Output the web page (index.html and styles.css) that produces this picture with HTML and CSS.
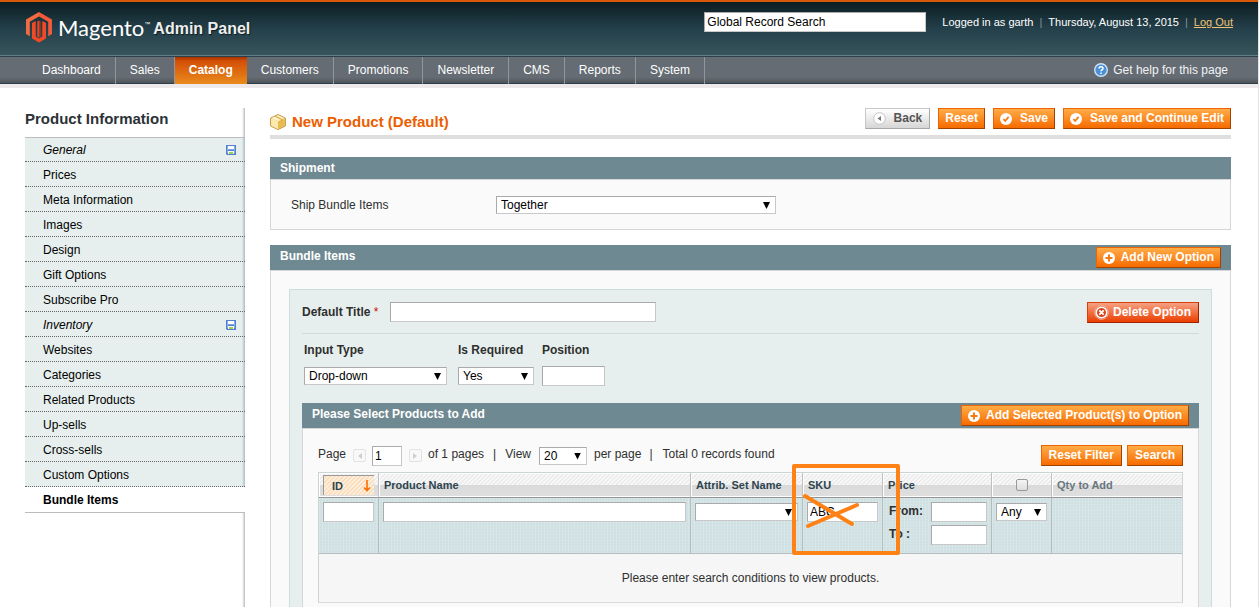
FILE: index.html
```html
<!DOCTYPE html>
<html lang="en">
<head>
<meta charset="utf-8">
<title>New Product / Magento Admin</title>
<link rel="stylesheet" href="styles.css">
</head>
<body>
<svg class="defs" width="0" height="0" aria-hidden="true">
  <defs>
    <symbol id="i-check" viewBox="0 0 12 12"><circle cx="6" cy="6" r="6" fill="#fff"/><path d="M3.4 6.2 5.2 8 8.6 3.9" fill="none" stroke="#f47b14" stroke-width="1.8"/></symbol>
    <symbol id="i-plus" viewBox="0 0 12 12"><circle cx="6" cy="6" r="6" fill="#fff"/><path d="M6 2.5v7M2.5 6h7" fill="none" stroke="#f47b14" stroke-width="2"/></symbol>
    <symbol id="i-back" viewBox="0 0 13 13"><circle cx="6.500" cy="6.500" r="5.800" fill="#fff" stroke="#c4c4c4"/><path d="M8 4v5L4.500 6.500z" fill="#777"/></symbol>
    <symbol id="i-delete" viewBox="0 0 15 15"><circle cx="7.500" cy="7.500" r="6.800" fill="#d9441a" stroke="#f6b49a"/><circle cx="7.500" cy="7.500" r="5.300" fill="none" stroke="#fff" stroke-width="1.600"/><path d="M5.300 5.300l4.400 4.400M9.700 5.300 5.300 9.700" stroke="#fff" stroke-width="1.800"/></symbol>
    <symbol id="i-disk" viewBox="0 0 10 10"><path d="M0 0h10v10H1L0 9z" fill="#5580cc"/><path d="M1 1h1v7H1zM8 1h1v7H8z" fill="#86aceb"/><path d="M2 1h6v3H2z" fill="#fff"/><path d="M2 4h6v1H2z" fill="#7ba3e6"/><path d="M2 6h6v3H2z" fill="#f4faef"/><path d="M3 7h4v2H3z" fill="#9ccf5a"/></symbol>
  </defs>
</svg>
<div class="page">
  <header class="header">
    <a class="logo" href="#" aria-label="Magento Admin Panel">
      <svg width="28" height="32" viewBox="0 0 28 32" aria-hidden="true"><path d="M14 1 27 8.500v14.600l-3.800 2.200V10.700L14 5.400z" fill="#f0593a"/><path d="M14 1 1 8.500v14.600l3.800 2.200V10.700L14 5.400z" fill="#f26b43"/><path d="M7 12l3.700-2.100V25.500l3.300 2 3.300-2V9.900L21 12v15.500L14 31.500 7 27.500z" fill="#f04a24"/><path d="M12.300 10.500 14 9.500v17l-1.700-1z" fill="#d94a2c"/><path d="M15.700 10.500 14 9.500v17l1.700-1z" fill="#b92f18"/></svg>
      <span class="logo-name">Magento</span><span class="logo-tm">™</span><span class="logo-panel">Admin Panel</span>
    </a>
    <div class="header-right">
      <input class="search" type="text" value="Global Record Search" aria-label="Global Record Search">
      <p class="account">Logged in as garth<span class="bar">|</span>Thursday, August 13, 2015<span class="bar">|</span><a href="#">Log Out</a></p>
    </div>
  </header>
  <nav class="nav">
    <ul>
      <li><a href="#">Dashboard</a></li>
      <li><a href="#">Sales</a></li>
      <li class="active"><a href="#">Catalog</a></li>
      <li><a href="#">Customers</a></li>
      <li><a href="#">Promotions</a></li>
      <li><a href="#">Newsletter</a></li>
      <li><a href="#">CMS</a></li>
      <li><a href="#">Reports</a></li>
      <li><a href="#">System</a></li>
    </ul>
    <a class="help" href="#"><svg width="14" height="14" viewBox="0 0 14 14" aria-hidden="true"><circle cx="7" cy="7" r="6.300" fill="#4b8fd6" stroke="#cfe2f5" stroke-width="1.400"/><path d="M5 5.600C5 3 9 3.100 9 5.400 9 6.800 7 6.800 7 8.300M7 9.400v1.500" fill="none" stroke="#fff" stroke-width="1.500"/></svg>Get help for this page</a>
  </nav>
  <div class="workspace">
    <aside class="side">
      <h3>Product Information</h3>
      <ul class="tabs">
        <li><a class="changed" href="#">General<svg width="10" height="10"><use href="#i-disk"/></svg></a></li>
        <li><a href="#">Prices</a></li>
        <li><a href="#">Meta Information</a></li>
        <li><a href="#">Images</a></li>
        <li><a href="#">Design</a></li>
        <li><a href="#">Gift Options</a></li>
        <li><a href="#">Subscribe Pro</a></li>
        <li><a class="changed" href="#">Inventory<svg width="10" height="10"><use href="#i-disk"/></svg></a></li>
        <li><a href="#">Websites</a></li>
        <li><a href="#">Categories</a></li>
        <li><a href="#">Related Products</a></li>
        <li><a href="#">Up-sells</a></li>
        <li><a href="#">Cross-sells</a></li>
        <li><a href="#">Custom Options</a></li>
        <li><a class="current" href="#">Bundle Items</a></li>
      </ul>
    </aside>
    <main class="main">
      <div class="title-bar">
        <h1><svg width="16" height="16" viewBox="0 0 16 16" aria-hidden="true"><path d="M8 .6 15.300 4v8L8 15.500.7 12V4z" fill="#f6dc8c" stroke="#bf8f38"/><path d="M1.200 4.300 8 7.500v7.400L1.200 11.700z" fill="#fbe9ae"/><path d="M14.800 4.300 8 7.500v7.400l6.800-3.200z" fill="#e9bb52"/><path d="M8 1.200 14.300 4 8 7 1.700 4z" fill="#fdf3cf"/><path d="M4.500 2.700l6.500 3v2.500l1.500-.7V5L6 2.100z" fill="#e2b14d"/></svg>New Product (Default)</h1>
        <div class="actions">
          <button class="btn back" type="button"><svg width="13" height="13"><use href="#i-back"/></svg>Back</button>
          <button class="btn" type="button">Reset</button>
          <button class="btn" type="button"><svg width="12" height="12"><use href="#i-check"/></svg>Save</button>
          <button class="btn" type="button"><svg width="12" height="12"><use href="#i-check"/></svg>Save and Continue Edit</button>
        </div>
      </div>

      <section class="panel">
        <h4 class="panel-head slim">Shipment</h4>
        <div class="panel-body shipment">
          <label for="ship">Ship Bundle Items</label>
          <span class="select w-ship"><select id="ship"><option>Together</option></select></span>
        </div>
      </section>

      <section class="panel grow">
        <div class="panel-head"><h4>Bundle Items</h4><button class="btn add" type="button"><svg width="12" height="12"><use href="#i-plus"/></svg>Add New Option</button></div>
        <div class="panel-body items">
          <div class="option">
            <div class="option-title">
              <label for="title">Default Title <em>*</em></label>
              <input id="title" class="w-title" type="text">
              <button class="btn delete" type="button"><svg width="15" height="15"><use href="#i-delete"/></svg>Delete Option</button>
            </div>
            <div class="option-fields">
              <div class="field"><label for="type">Input Type</label><span class="select w-type"><select id="type"><option>Drop-down</option></select></span></div>
              <div class="field"><label for="req">Is Required</label><span class="select w-req"><select id="req"><option>Yes</option></select></span></div>
              <div class="field"><label for="pos">Position</label><input id="pos" type="text"></div>
            </div>

            <section class="panel grow">
              <div class="panel-head"><h4>Please Select Products to Add</h4><button class="btn add" type="button"><svg width="12" height="12"><use href="#i-plus"/></svg>Add Selected Product(s) to Option</button></div>
              <div class="panel-body grid-body">
                <div class="pager">
                  <label for="pg">Page</label>
                  <button class="arrow" type="button" aria-label="Previous page"><svg width="5" height="6" viewBox="0 0 5 6"><path d="M5 0v6L1 3z" fill="#cfcfcf"/></svg></button>
                  <input id="pg" class="w-page" type="text" value="1">
                  <button class="arrow" type="button" aria-label="Next page"><svg width="5" height="6" viewBox="0 0 5 6"><path d="M0 0v6l4-3z" fill="#cfcfcf"/></svg></button>
                  <span class="text">of 1 pages</span><span class="text sep">|</span>
                  <label for="per">View</label>
                  <span class="select w-per"><select id="per"><option>20</option></select></span>
                  <span class="text">per page</span><span class="text sep tight">|</span><span class="text">Total 0 records found</span>
                  <div class="pager-actions"><button class="btn" type="button">Reset Filter</button><button class="btn" type="button">Search</button></div>
                </div>
                <table class="grid">
                  <colgroup><col class="c-id"><col><col class="c-set"><col class="c-sku"><col class="c-price"><col class="c-any"><col class="c-qty"></colgroup>
                  <thead>
                    <tr>
                      <th class="sorted"><a href="#">ID<svg width="8" height="12" viewBox="0 0 8 12" aria-hidden="true"><path d="M4 0v10M1 7.500l3 3 3-3" fill="none" stroke="#ff6c00" stroke-width="1.600"/></svg></a></th>
                      <th>Product Name</th>
                      <th>Attrib. Set Name</th>
                      <th class="marked">SKU<svg class="mark" width="108" height="91" viewBox="0 0 108 91" aria-hidden="true"><g fill="none" stroke="#ff8217" stroke-width="4"><rect x="2" y="2" width="104" height="87" stroke-linejoin="round"/><path d="M13 32l47 28M16 62l49-21" stroke-linecap="round"/></g></svg></th>
                      <th>Price</th>
                      <th class="tick"><input type="checkbox" aria-label="Select all"></th>
                      <th class="muted">Qty to Add</th>
                    </tr>
                  </thead>
                  <tbody>
                    <tr class="filter">
                      <td><input type="text" aria-label="ID"></td>
                      <td><input type="text" aria-label="Product Name"></td>
                      <td><span class="select"><select aria-label="Attribute set"><option></option></select></span></td>
                      <td><input type="text" value="ABC" aria-label="SKU"></td>
                      <td><div class="range"><label for="from">From:</label><input id="from" type="text"><label for="to">To :</label><input id="to" type="text"></div></td>
                      <td><span class="select"><select aria-label="Selected"><option>Any</option></select></span></td>
                      <td></td>
                    </tr>
                    <tr class="empty"><td colspan="7">Please enter search conditions to view products.</td></tr>
                  </tbody>
                </table>
              </div>
            </section>
          </div>
        </div>
      </section>
    </main>
  </div>
</div>
</body>
</html>
```
FILE: styles.css
```css
* { box-sizing: border-box; }
body { margin: 0; background: #fff; color: #2f2f2f; font: 12px/16px "Liberation Sans", Arial, sans-serif; }
h1, h3, h4, p, ul { margin: 0; padding: 0; }
ul { list-style: none; }
a { color: inherit; text-decoration: none; }
svg { display: block; flex: none; }
.defs { position: absolute; }
.page { display: flex; flex-direction: column; min-height: 100vh; border-right: 1px solid #e3e3e3; }

input, select, button { margin: 0; font: inherit; border-radius: 0; }
input[type="text"] { display: block; width: 100%; height: 20px; padding: 0 2px; border: 1px solid #aaa; border-right-color: #c8c8c8; border-bottom-color: #c8c8c8; background: #fff; color: #000; }
.select { position: relative; display: block; }
.select select { display: block; width: 100%; height: 18px; padding: 0 4px; border: 1px solid #aaa; border-right-color: #c8c8c8; border-bottom-color: #c8c8c8; background: #fff; color: #000; line-height: 16px; appearance: none; }
.select::after { content: ""; position: absolute; right: 6px; top: 6px; width: 7px; height: 7px; background: #000; clip-path: polygon(0 0, 100% 0, 50% 100%); pointer-events: none; }

.header { display: flex; justify-content: space-between; height: 57px; padding: 9px 25px 0; border-top: 2px solid #d85909; background: linear-gradient(#0b1d22, #24404a 50%, #38555d); border-bottom: 1px solid #2b404c; box-shadow: inset 0 -1px #637e87; color: #fff; }
.logo { display: flex; align-items: flex-start; }
.logo-name { margin-left: 5px; font: 22px/34px Lato, "Open Sans", sans-serif; }
.logo-tm { font-size: 6px; line-height: 26px; }
.logo-panel { margin-left: 3px; font: bold 16px/36px "Liberation Sans", Arial, sans-serif; color: #eee; text-shadow: 1px 1px 1px #0b1d22; }
.header-right { display: flex; align-items: flex-start; gap: 16px; padding-top: 1px; }
.header-right .search { width: 222px; }
.account { font-size: 11px; line-height: 20px; white-space: nowrap; }
.account .bar { margin: 0 6px; color: #84949a; }
.account a { color: #f0c274; text-decoration: underline; }

.nav { display: flex; justify-content: space-between; height: 31px; padding: 0 30px 0 28px; border-bottom: 4px solid #eeeaec; background: linear-gradient(#656c73 75%, #4e5459 96%, #2c414e 97%); color: #fff; line-height: 26px; }
.nav ul { display: flex; }
.nav li { height: 27px; padding: 0 14px; border-right: 1px solid #8f979b; }
.nav .active { padding: 0 14px; border-right: 0; background: linear-gradient(#a83200, #d45007 15%, #e98b1c); font-weight: bold; }
.help { display: flex; align-items: center; gap: 5px; height: 26px; color: #f1f3f5; }

.workspace { flex: 1; display: flex; gap: 25px; padding: 20px 27px 0 25px; }
.side { flex: none; width: 220px; background: linear-gradient(to right, #fff 217px, #ececec 218px, #bbb); }
.side h3 { height: 29px; font-size: 15px; line-height: 22px; color: #2b3236; }
.tabs { border-top: 1px solid #bcbcbc; border-bottom: 1px solid #bcbcbc; }
.tabs a { display: flex; justify-content: space-between; align-items: center; height: 25px; padding: 1px 9px 0 18px; border-bottom: 1px dotted #666; background: linear-gradient(to right, #e7efee 217px, #cfdcdd 218px, #a9bfc1); color: #000; }
.tabs li:first-child a { height: 24px; }
.tabs .changed { font-style: italic; }
.tabs .current { padding-top: 0; border: 0; background: #fff; font-weight: bold; }

.main { flex: 1; min-width: 0; display: flex; flex-direction: column; }
.title-bar { display: flex; justify-content: space-between; align-items: flex-start; height: 31px; margin-bottom: 18px; border-bottom: 4px solid #dfdfdf; }
h1 { display: flex; align-items: center; gap: 6px; padding-top: 4px; font-size: 15px; line-height: 20px; color: #eb5e00; white-space: nowrap; }
.actions { display: flex; gap: 8px; }
.btn { display: flex; align-items: center; gap: 8px; height: 21px; padding: 0 7px; border: 1px solid; border-color: #ed6502 #a04300 #a04300 #ed6502; background: linear-gradient(#ffac47, #f76b00); color: #fff; font-weight: bold; line-height: 17px; white-space: nowrap; cursor: pointer; }
.actions .btn { padding: 0 6px; }
.actions .back { padding: 0 7px; border-color: #c8c8c8 #a8a8a8 #a8a8a8 #c8c8c8; background: linear-gradient(#fff, #d6d6d6); color: #555; }
.btn.add { gap: 6px; padding: 0 6px; }
.btn.delete { gap: 4px; margin-left: auto; padding: 0 7px 0 6px; border-color: #d93f08 #a02200 #a02200 #d93f08; background: linear-gradient(#f6a183, #eb3e00); }

.panel { margin-bottom: 15px; }
.panel.grow, .items, .option, .grid-body { flex: 1; display: flex; flex-direction: column; margin-bottom: 0; }
.panel-head { display: flex; justify-content: space-between; height: 25px; padding: 2px 10px; background: #6f8992; color: #fff; line-height: 18px; }
.panel-head.slim { height: 22px; font-size: 12px; }
.panel-head h4 { font-size: 12px; }
.panel-body { border: 1px solid #d6d6d6; background: #fafafa; }
.shipment { display: flex; align-items: center; padding: 16px 20px 15px; }
.shipment label { width: 205px; }
.items { padding: 18px 18px 0; border-bottom: 0; }
.option { padding: 12px 12px 0; border: 1px solid #cddddd; border-bottom: 0; background: #e7efee; }
.option-title { display: flex; align-items: center; height: 32px; padding-bottom: 11px; border-bottom: 1px solid #cddddd; font-weight: bold; }
.option-title label { width: 88px; }
.option-title em { color: #d40707; font-style: normal; font-weight: normal; }
.option-title input { font-weight: normal; }
.option-fields { display: grid; grid-template-columns: 154px 84px 63px; padding: 8px 2px 17px; }
.field label { display: block; height: 24px; font-weight: bold; }
.field .select { margin-top: 1px; }
.w-ship { width: 280px; }
.option-title .w-title { width: 266px; }
.w-type { width: 143px; }
.w-req { width: 76px; }

.grid-body { padding: 16px 15px 0; border-bottom: 0; }
.pager { display: flex; align-items: center; height: 21px; margin-bottom: 6px; white-space: nowrap; }
.pager label, .pager .text { padding-bottom: 3px; }
.pager .arrow { display: flex; align-items: center; justify-content: center; width: 13px; height: 13px; margin: 0 6px 0 7px; padding: 0; border: 1px solid #e3e3e3; border-radius: 2px; background: #f8f8f8; }
.pager .w-page { width: 30px; }
.pager .sep { margin: 0 9px; }
.pager .tight { margin: 0 10px 0 8px; }
.pager .select { width: 48px; margin: 0 7px 0 8px; }
.pager-actions { display: flex; gap: 5px; margin-left: auto; }

.grid { width: 100%; border-collapse: separate; border-spacing: 0; table-layout: fixed; border: 1px solid #cbd3d4; border-bottom-color: #dadada; }
.c-id { width: 60px; }
.c-set { width: 112px; }
.c-sku { width: 80px; }
.c-price { width: 109px; }
.c-any { width: 60px; }
.c-qty { width: 130px; }
.grid th { height: 25px; padding: 0 5px; border-right: 1px solid #bfbfbf; border-bottom: 1px solid #949494; background: linear-gradient(transparent 50%, #dadada 51%, #dfdfdf), repeating-linear-gradient(135deg, #f8f8f8 0 1px, #e6e6e6 2px, #f8f8f8 3px); box-shadow: inset 1px 1px #fff, inset 0 -1px #fff; color: #2d444f; font-size: 11px; text-align: left; }
.grid th.sorted { padding: 1px 4px; }
.grid .sorted a { display: flex; align-items: center; justify-content: space-between; height: 20px; padding: 0 3px 0 8px; border-top: 1px solid #9a9a9a; border-left: 1px solid #9a9a9a; background: repeating-linear-gradient(135deg, #fdeedd 0 1px, #fbd5aa 2px, #fdeedd 3px); }
.grid .marked { position: relative; }
.mark { position: absolute; left: -11px; top: -9px; z-index: 1; overflow: visible; pointer-events: none; }
.grid th.tick { text-align: center; }
.tick input { display: block; width: 12px; height: 12px; margin: 0 auto; border: 1px solid #999; border-radius: 2px; background: linear-gradient(#f4f4f4, #ddd); appearance: none; }
.grid th.muted { color: #67767e; }
.grid th:last-child, .grid td:last-child { border-right: 0; }
.filter td { height: 56px; padding: 4px; vertical-align: top; border-right: 1px solid #b7bcbd; border-bottom: 1px solid #b7bcbd; background: repeating-linear-gradient(#dce9ea66 0 1px, transparent 1px 3px), repeating-linear-gradient(to right, #d8e6e8 0 1px, #cfe0e3 1px 3px); }
.filter .select { margin-top: 1px; }
.range { display: grid; grid-template-columns: 1fr 56px; row-gap: 3px; padding-left: 2px; font-weight: bold; line-height: 18px; }
.range input { font-weight: normal; }
.empty td { height: 48px; background: #f6f6f6; text-align: center; }
```
